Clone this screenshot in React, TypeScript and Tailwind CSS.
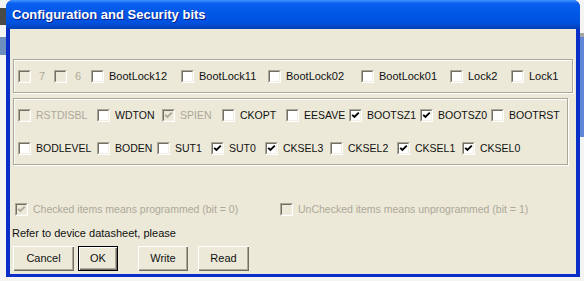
import React from "react";

type Bit = { label: string; w?: number; checked?: boolean; disabled?: boolean; pad?: number };

function Box({ checked, disabled }: { checked?: boolean; disabled?: boolean }) {
  return (
    <div className="w-[13px] h-[13px] shrink-0 border-t border-l border-t-[#aca899] border-l-[#aca899] border-b border-r border-b-white border-r-white">
      <div
        className={
          "w-full h-full border-t border-l border-t-[#716f64] border-l-[#716f64] border-b border-r border-b-[#f1efe2] border-r-[#f1efe2] flex items-center justify-center " +
          (disabled ? "bg-[#ece9d8]" : "bg-white")
        }
      >
        {checked && (
          <svg width="9" height="9" viewBox="0 0 9 9">
            <path
              d="M1.2 3.8 L3.4 6 L7.8 1.6"
              fill="none"
              stroke={disabled ? "#aca899" : "#000"}
              strokeWidth="1.9"
            />
          </svg>
        )}
      </div>
    </div>
  );
}

function Check({ label, w, checked, disabled, pad = 5, small }: Bit & { small?: boolean }) {
  return (
    <div className="flex items-center shrink-0 h-[15px]" style={w ? { width: w } : undefined}>
      <Box checked={checked} disabled={disabled} />
      <span
        className={
          "whitespace-nowrap leading-[13px] " +
          (small ? "text-[10.5px] " : "text-[11px] ") +
          (disabled ? "text-[#aca899]" : "text-[#111]")
        }
        style={{ marginLeft: pad }}
      >
        {label}
      </span>
    </div>
  );
}

function Btn({ label, w, ml, def }: { label: string; w: number; ml: number; def?: boolean }) {
  return (
    <div
      className={"h-[25px] shrink-0 " + (def ? "border border-black" : "")}
      style={{ width: w, marginLeft: ml }}
    >
      <div className="w-full h-full flex items-center justify-center text-[11px] text-[#111] shadow-[inset_1px_1px_0_#fff,inset_-1px_-1px_0_#716f64,inset_-2px_-2px_0_#aca899]">
        {label}
      </div>
    </div>
  );
}

const lockBits: Bit[] = [
  { label: "7", w: 36, disabled: true, pad: 8 },
  { label: "6", w: 37, disabled: true, pad: 8 },
  { label: "BootLock12", w: 90 },
  { label: "BootLock11", w: 87 },
  { label: "BootLock02", w: 93 },
  { label: "BootLock01", w: 89 },
  { label: "Lock2", w: 61 },
  { label: "Lock1" },
];

const highBits: Bit[] = [
  { label: "RSTDISBL", w: 79, disabled: true },
  { label: "WDTON", w: 65 },
  { label: "SPIEN", w: 60, checked: true, disabled: true },
  { label: "CKOPT", w: 64 },
  { label: "EESAVE", w: 63 },
  { label: "BOOTSZ1", w: 71, checked: true },
  { label: "BOOTSZ0", w: 71, checked: true },
  { label: "BOOTRST" },
];

const lowBits: Bit[] = [
  { label: "BODLEVEL", w: 79 },
  { label: "BODEN", w: 60 },
  { label: "SUT1", w: 54 },
  { label: "SUT0", w: 54, checked: true },
  { label: "CKSEL3", w: 65, checked: true },
  { label: "CKSEL2", w: 67 },
  { label: "CKSEL1", w: 65, checked: true },
  { label: "CKSEL0", checked: true },
];

export default function App() {
  return (
    <div className="w-[584px] h-[281px] flex bg-[#f4f4f2] overflow-hidden font-['Liberation_Sans',Arial,sans-serif]">
      {/* desktop behind, left edge */}
      <div className="w-[6px] shrink-0 flex flex-col">
        <div className="h-[8px]" />
        <div className="h-[17px] bg-[#4a4a46]" />
        <div className="h-[12px]" />
        <div className="h-[18px] bg-[#6d8fc0]" />
      </div>

      {/* window */}
      <div className="w-[574px] h-[277px] shrink-0 flex flex-col rounded-t-[7px] bg-[#0a2fc8] overflow-hidden">
        <div className="h-[29px] shrink-0 flex items-center pl-[6px] bg-[linear-gradient(180deg,#3d95ff_0%,#0a5fee_12%,#0058e8_45%,#0051dd_80%,#0040b4_100%)]">
          <span className="text-white font-bold text-[13px] [text-shadow:1px_1px_0_#0a1f8a]">
            Configuration and Security bits
          </span>
        </div>

        <div className="flex-1 mx-[4px] mb-[3px] bg-[#ece9d8] flex flex-col">
          <div className="mt-[30px] ml-[3px] w-[560px] h-[34px] border border-[#aca899] shadow-[inset_1px_1px_0_#fff,1px_1px_0_#fff] flex items-center pl-[4px]">
            {lockBits.map((b) => (
              <Check key={b.label} {...b} />
            ))}
          </div>

          <div className="mt-[5px] ml-[3px] w-[555px] h-[67px] border border-[#aca899] shadow-[inset_1px_1px_0_#fff,1px_1px_0_#fff] flex flex-col pt-[9px] pl-[4px] gap-[18px]">
            <div className="flex items-center">
              {highBits.map((b) => (
                <Check key={b.label} {...b} small />
              ))}
            </div>
            <div className="flex items-center">
              {lowBits.map((b) => (
                <Check key={b.label} {...b} small />
              ))}
            </div>
          </div>

          <div className="mt-[37px] pl-[5px] flex items-center">
            <Check label="Checked items means programmed (bit = 0)" w={265} checked disabled small />
            <Check label="UnChecked items means unprogrammed (bit = 1)" disabled small />
          </div>

          <div className="mt-[10px] pl-[2px] h-[13px] text-[11px] leading-[13px] text-[#111]">
            Refer to device datasheet, please
          </div>

          <div className="mt-[6px] flex">
            <Btn label="Cancel" w={61} ml={3} />
            <Btn label="OK" w={40} ml={4} def />
            <Btn label="Write" w={50} ml={20} />
            <Btn label="Read" w={51} ml={10} />
          </div>
        </div>
      </div>

      {/* desktop behind, right edge */}
      <div className="w-[4px] shrink-0 flex flex-col">
        <div className="h-[33px]" />
        <div className="h-[4px] bg-[#a7a6a0]" />
        <div className="h-[100px] bg-[#5f86d8]" />
      </div>
    </div>
  );
}
